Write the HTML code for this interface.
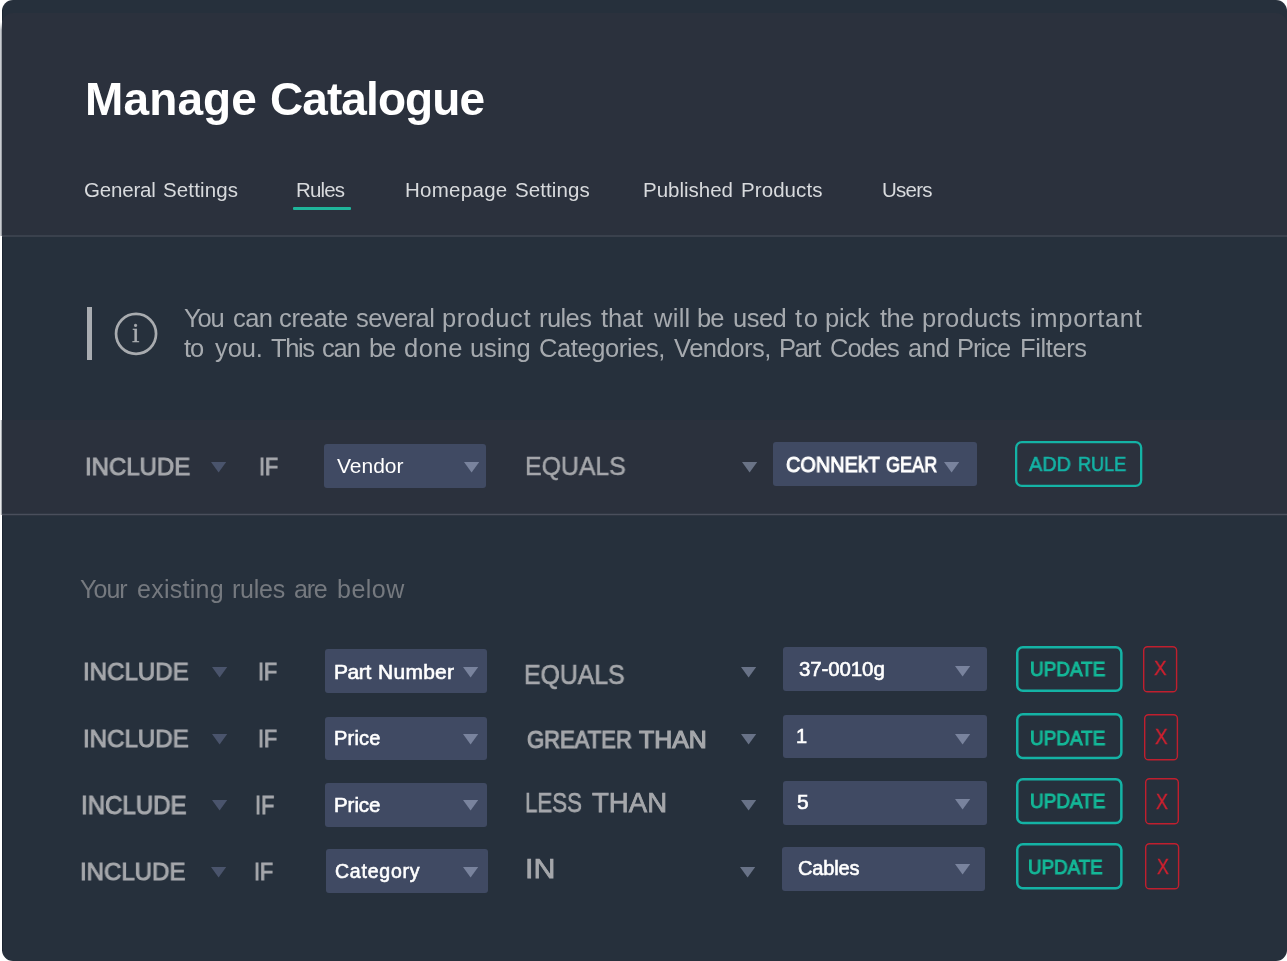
<!DOCTYPE html>
<html lang="en">
<head>
<meta charset="utf-8">
<title>Manage Catalogue</title>
<style>
  html, body { margin: 0; padding: 0; }
  body {
    width: 1287px; height: 961px; position: relative; overflow: hidden;
    background: #ffffff;
    font-family: "Liberation Sans", sans-serif;
  }
  .abs { position: absolute; }
  #panel { left: 2px; top: 0; width: 1285px; height: 961px; background: #26303c; border-radius: 11px; }
  #panel-edge { left: 2px; top: 10px; width: 1px; height: 941px; background: #1b2431; }
  #hdr { left: 2px; top: 13px; width: 1285px; height: 222px; background: #2b313d; border-radius: 11px 11px 0 0; }
  #band { left: 2px; top: 420px; width: 1285px; height: 94px; background: #2b313d; }
  .strip { left: 0; width: 3px; background: linear-gradient(to right, #cdd0d5 0, #c4c7cc 1.2px, #2b313d 2.4px); }
  #strip1 { top: 21px; height: 215px; }
  #strip1top { left: 0; top: 20px; width: 2px; height: 10px; background: linear-gradient(to bottom, rgba(255,255,255,1) 20%, rgba(255,255,255,0)); }
  #strip2 { top: 420px; height: 95px; background: linear-gradient(to right, #eceded 0, #e2e4e6 1.2px, #2b313d 2.2px); }
  .hr { left: 2px; width: 1285px; }
  #hr1 { top: 235px; height: 2px; background: #3a414d; }
  #hr2 { top: 514px; height: 1px; background: #4a4f5c; box-shadow: 0 1px 0 #2f3642, 0 -1px 0 #313844; }

  .t { position: absolute; white-space: nowrap; line-height: 1; margin: 0; padding: 0; transform-origin: 0 0; will-change: transform; }
  .sb { -webkit-text-stroke: 1px currentColor; }
  .mb { -webkit-text-stroke: 0.6px currentColor; }

  #title { position: absolute; left: 0; top: 0; }
  .tab { font-size: 20px; color: #d8dadd; top: 180px; }
  #ul { left: 292.5px; top: 207px; width: 58px; height: 3px; background: #1fb59b; border-radius: 1px; }

  #bar { left: 87px; top: 307px; width: 5px; height: 53px; background: #a9acb1; }
  #circ { left: 113px; top: 311px; }
  #ci { left: 132.4px; top: 319.6px; font-family: "Liberation Serif", serif; font-size: 27px; color: #a8abaf; -webkit-text-stroke: 0.35px #a8abaf; }
  .info { font-size: 25.5px; color: #a6aaaf; }
  .infop { position: absolute; left: 0; top: 0; margin: 0; }

  .lbl { font-size: 25px; color: #a6a8ac; }
  .op { font-size: 27px; color: #a5a7ab; -webkit-text-stroke: 0.5px currentColor; }
  .op.n { -webkit-text-stroke-width: 0.7px; }
  .op.m { -webkit-text-stroke-width: 0.75px; }
  .op.h { -webkit-text-stroke-width: 1.2px; }
  .opw, .grp { position: absolute; left: 0; top: 0; }
  .tri { position: absolute; fill: #4a546c; overflow: visible; }
  .tri.m { fill: #687287; }
  .tri.l { fill: #79839d; }
  .tri.g { fill: #6a7386; }
  .sel { position: absolute; background: #404a63; border-radius: 3px; }
  .sv { font-size: 21px; color: #ffffff; }
  .btn { position: absolute; overflow: visible; fill: none; stroke: #14b3a5; }
  .bt { font-size: 21px; color: #14b898; }
  .xb { position: absolute; overflow: visible; fill: none; stroke: #c01f2e; }
  .xt { font-size: 20px; color: #d0202f; -webkit-text-stroke: 0.35px currentColor; }
  .note { font-size: 25px; color: #75797f; }
  #b_bt .bt { color: #14b3a5; }
</style>
</head>
<body>
<div id="panel" class="abs"></div>
<div id="panel-edge" class="abs"></div>
<div id="hdr" class="abs"></div>
<div id="band" class="abs"></div>
<div id="strip1" class="abs strip"></div>
<div id="strip1top" class="abs"></div>
<div id="strip2" class="abs strip"></div>
<div id="hr1" class="abs hr"></div>
<div id="hr2" class="abs hr"></div>

<h1 id="title" style="margin:0;font-size:45px;font-weight:bold;color:#fff"><span id="title_a" class="t" style="left:84.6px;top:76.1px;font-size:46.0px;letter-spacing:0.13px">Manage</span> <span id="title_b" class="t" style="left:269.8px;top:76.1px;font-size:46.0px;letter-spacing:-0.92px">Catalogue</span></h1>

<div id="tab1" class="grp"><span id="tab1_0" class="t tab" style="left:84.0px;top:179.6px;font-size:20.5px;letter-spacing:-0.19px">General</span> <span id="tab1_1" class="t tab" style="left:162.5px;top:179.6px;font-size:20.5px;letter-spacing:0.15px">Settings</span></div>
<div id="tab2" class="t tab" style="left:296.2px;top:179.6px;font-size:20.5px;letter-spacing:-0.87px">Rules</div>
<div id="tab3" class="grp"><span id="tab3_0" class="t tab" style="left:404.9px;top:179.6px;font-size:20.5px;letter-spacing:0.28px">Homepage</span> <span id="tab3_1" class="t tab" style="left:515.0px;top:179.6px;font-size:20.5px;letter-spacing:0.08px">Settings</span></div>
<div id="tab4" class="grp"><span id="tab4_0" class="t tab" style="left:642.9px;top:179.6px;font-size:20.5px;letter-spacing:-0.01px">Published</span> <span id="tab4_1" class="t tab" style="left:741.1px;top:179.6px;font-size:20.5px;letter-spacing:0.08px">Products</span></div>
<div id="tab5" class="t tab" style="left:882.1px;top:179.6px;font-size:20.5px;letter-spacing:-0.73px">Users</div>
<div id="ul" class="abs"></div>

<div id="bar" class="abs"></div>
<svg id="circ" class="abs" width="46" height="46" viewBox="0 0 46 46"><circle cx="23.05" cy="22.85" r="20" fill="none" stroke="#a8abaf" stroke-width="2.7"/></svg>
<div id="ci" class="t">i</div>
<p id="info1" class="infop"><span id="i1w0" class="t info" style="left:184.1px;top:306.2px;font-size:25.5px;letter-spacing:-1.14px">You</span> <span id="i1w1" class="t info" style="left:232.6px;top:306.2px;font-size:25.5px;letter-spacing:-0.60px">can</span> <span id="i1w2" class="t info" style="left:278.6px;top:306.2px;font-size:25.5px;letter-spacing:-0.34px">create</span> <span id="i1w3" class="t info" style="left:356.1px;top:306.2px;font-size:25.5px;letter-spacing:-0.55px">several</span> <span id="i1w4" class="t info" style="left:442.4px;top:306.2px;font-size:25.5px;letter-spacing:0.58px">product</span> <span id="i1w5" class="t info" style="left:538.6px;top:306.2px;font-size:25.5px;letter-spacing:-0.58px">rules</span> <span id="i1w6" class="t info" style="left:600.6px;top:306.2px;font-size:25.5px;letter-spacing:-0.11px">that</span> <span id="i1w7" class="t info" style="left:653.5px;top:306.2px;font-size:25.5px;letter-spacing:0.29px">will</span> <span id="i1w8" class="t info" style="left:697.0px;top:306.2px;font-size:25.5px;letter-spacing:-0.81px">be</span> <span id="i1w9" class="t info" style="left:732.6px;top:306.2px;font-size:25.5px;letter-spacing:-0.51px">used</span> <span id="i1w10" class="t info" style="left:795.0px;top:306.2px;font-size:25.5px;letter-spacing:1.56px">to</span> <span id="i1w11" class="t info" style="left:824.8px;top:306.2px;font-size:25.5px;letter-spacing:-0.16px">pick</span> <span id="i1w12" class="t info" style="left:880.1px;top:306.2px;font-size:25.5px;letter-spacing:-0.46px">the</span> <span id="i1w13" class="t info" style="left:922.0px;top:306.2px;font-size:25.5px;letter-spacing:0.22px">products</span> <span id="i1w14" class="t info" style="left:1029.5px;top:306.2px;font-size:25.5px;letter-spacing:0.68px">important</span></p>
<p id="info2" class="infop"><span id="i2w0" class="t info" style="left:183.8px;top:336.1px;font-size:25.5px;letter-spacing:-1.03px">to</span> <span id="i2w1" class="t info" style="left:215.4px;top:336.1px;font-size:25.5px;letter-spacing:-0.12px">you.</span> <span id="i2w2" class="t info" style="left:271.4px;top:336.1px;font-size:25.5px;letter-spacing:-1.42px">This</span> <span id="i2w3" class="t info" style="left:321.6px;top:336.1px;font-size:25.5px;letter-spacing:-1.15px">can</span> <span id="i2w4" class="t info" style="left:368.8px;top:336.1px;font-size:25.5px;letter-spacing:-1.09px">be</span> <span id="i2w5" class="t info" style="left:403.6px;top:336.1px;font-size:25.5px;letter-spacing:0.55px">done</span> <span id="i2w6" class="t info" style="left:469.6px;top:336.1px;font-size:25.5px;letter-spacing:-0.09px">using</span> <span id="i2w7" class="t info" style="left:538.9px;top:336.1px;font-size:25.5px;letter-spacing:-0.40px">Categories,</span> <span id="i2w8" class="t info" style="left:674.2px;top:336.1px;font-size:25.5px;letter-spacing:-0.46px">Vendors,</span> <span id="i2w9" class="t info" style="left:778.6px;top:336.1px;font-size:25.5px;letter-spacing:-1.50px">Part</span> <span id="i2w10" class="t info" style="left:830.0px;top:336.1px;font-size:25.5px;letter-spacing:-0.98px">Codes</span> <span id="i2w11" class="t info" style="left:907.9px;top:336.1px;font-size:25.5px;letter-spacing:-0.29px">and</span> <span id="i2w12" class="t info" style="left:957.2px;top:336.1px;font-size:25.5px;letter-spacing:-0.95px">Price</span> <span id="i2w13" class="t info" style="left:1019.5px;top:336.1px;font-size:25.5px;letter-spacing:-0.40px">Filters</span></p>

<!-- builder row -->
<div id="b_inc" class="t lbl sb" style="left:85.3px;top:454.9px;font-size:24.5px;transform:scaleX(0.978)">INCLUDE</div>
<svg id="b_tri1" class="tri" style="left:210.9px;top:461.8px" width="16" height="11" viewBox="0 0 16 11"><polygon points="0,0 15.2,0 7.6,10.4"/></svg>
<div id="b_if" class="t lbl sb" style="left:258.8px;top:454.9px;font-size:24.5px;transform:scaleX(0.882)">IF</div>
<div id="b_sel1" class="sel" style="left:324px;top:444px;width:162px;height:44px"></div>
<div id="b_sv1" class="t sv" style="left:337.4px;top:454.7px;font-size:21.0px;letter-spacing:-0.02px">Vendor</div>
<svg id="b_tri2" class="tri l" style="left:463.9px;top:461.8px" width="16" height="11" viewBox="0 0 16 11"><polygon points="0,0 15.2,0 7.6,10.4"/></svg>
<div id="b_op" class="t op" style="left:525.4px;top:452.8px;font-size:26.5px;transform:scaleX(0.938)">EQUALS</div>
<svg id="b_tri3" class="tri g" style="left:742.2px;top:461.8px" width="16" height="11" viewBox="0 0 16 11"><polygon points="0,0 15.2,0 7.6,10.4"/></svg>
<div id="b_sel2" class="sel" style="left:772.5px;top:442px;width:204px;height:44px"></div>
<div id="b_sv2" class="grp"><span id="b_sv2_0" class="t sv sb" style="left:785.5px;top:455.1px;font-size:21.5px;transform:scaleX(0.925)">CONNEkT</span> <span id="b_sv2_1" class="t sv sb" style="left:886.4px;top:455.1px;font-size:21.5px;transform:scaleX(0.839)">GEAR</span></div>
<svg id="b_tri4" class="tri l" style="left:944.2px;top:461.9px" width="16" height="11" viewBox="0 0 16 11"><polygon points="0,0 15.2,0 7.6,10.4"/></svg>
<svg id="b_btn" class="btn" style="left:1015.0px;top:441.0px" width="127.3" height="46.1"><rect x="1.15" y="1.15" width="125.00" height="43.80" rx="5.65" stroke-width="2.3"/></svg>
<div id="b_bt" class="grp"><span id="b_bt_0" class="t bt mb" style="left:1028.8px;top:453.9px;font-size:20.5px;transform:scaleX(0.967)">ADD</span> <span id="b_bt_1" class="t bt mb" style="left:1078.0px;top:453.9px;font-size:20.5px;transform:scaleX(0.882)">RULE</span></div>

<div id="note" class="grp"><span id="note_0" class="t note" style="left:79.8px;top:577.0px;font-size:25.0px;letter-spacing:-0.94px">Your</span> <span id="note_1" class="t note" style="left:136.6px;top:577.0px;font-size:25.0px;letter-spacing:0.26px">existing</span> <span id="note_2" class="t note" style="left:231.8px;top:577.0px;font-size:25.0px;letter-spacing:-0.26px">rules</span> <span id="note_3" class="t note" style="left:293.9px;top:577.0px;font-size:25.0px;letter-spacing:-1.21px">are</span> <span id="note_4" class="t note" style="left:337.4px;top:577.0px;font-size:25.0px;letter-spacing:0.48px">below</span></div>

<!-- rule row 1 -->
<div id="r1_inc" class="t lbl sb" style="left:82.5px;top:660.2px;font-size:24.5px;transform:scaleX(0.983)">INCLUDE</div>
<svg id="r1_tri1" class="tri" style="left:211.9px;top:666.8px" width="16" height="11" viewBox="0 0 16 11"><polygon points="0,0 15.2,0 7.6,10.4"/></svg>
<div id="r1_if" class="t lbl sb" style="left:257.7px;top:660.2px;font-size:24.5px;transform:scaleX(0.882)">IF</div>
<div id="r1_sel1" class="sel" style="left:325.0px;top:649.3px;width:162.0px;height:43.6px"></div>
<div id="r1_sv1" class="grp"><span id="r1_sv1_0" class="t sv mb" style="left:333.6px;top:661.3px;font-size:21.0px;letter-spacing:-0.43px">Part</span> <span id="r1_sv1_1" class="t sv mb" style="left:377.7px;top:661.3px;font-size:21.0px;letter-spacing:0.27px">Number</span></div>
<svg id="r1_tri2" class="tri l" style="left:462.9px;top:666.8px" width="16" height="11" viewBox="0 0 16 11"><polygon points="0,0 15.2,0 7.6,10.4"/></svg>
<div id="r1_op" class="t op n" style="left:524.2px;top:662.4px;font-size:27.0px;transform:scaleX(0.919)">EQUALS</div>
<svg id="r1_tri3" class="tri m" style="left:741.0px;top:666.8px" width="16" height="11" viewBox="0 0 16 11"><polygon points="0,0 15.2,0 7.6,10.4"/></svg>
<div id="r1_sel2" class="sel" style="left:782.9px;top:647.0px;width:204.1px;height:44.0px"></div>
<div id="r1_sv2" class="t sv mb" style="left:798.8px;top:659.0px;font-size:20.5px;letter-spacing:-0.12px">37-0010g</div>
<svg id="r1_tri4" class="tri l" style="left:954.8px;top:665.7px" width="16" height="11" viewBox="0 0 16 11"><polygon points="0,0 15.2,0 7.6,10.4"/></svg>
<svg id="r1_btn" class="btn" style="left:1016.1px;top:646.0px" width="106.6" height="46.1"><rect x="1.25" y="1.25" width="104.10" height="43.60" rx="5.55" stroke-width="2.5"/></svg>
<div id="r1_bt" class="t bt sb" style="left:1030.0px;top:659.2px;font-size:20.0px;transform:scaleX(0.946)">UPDATE</div>
<svg id="r1_xb" class="xb" style="left:1143.0px;top:646.0px" width="34.3" height="46.5"><rect x="0.70" y="0.70" width="32.90" height="45.10" rx="3.90" stroke-width="1.4"/></svg>
<div id="r1_xt" class="t xt" style="left:1154.3px;top:657.1px;font-size:21.0px;transform:scaleX(0.896)">X</div>

<!-- rule row 2 -->
<div id="r2_inc" class="t lbl sb" style="left:82.5px;top:726.6px;font-size:24.5px;transform:scaleX(0.983)">INCLUDE</div>
<svg id="r2_tri1" class="tri" style="left:211.9px;top:734.3px" width="16" height="11" viewBox="0 0 16 11"><polygon points="0,0 15.2,0 7.6,10.4"/></svg>
<div id="r2_if" class="t lbl sb" style="left:257.7px;top:726.6px;font-size:24.5px;transform:scaleX(0.882)">IF</div>
<div id="r2_sel1" class="sel" style="left:324.9px;top:716.7px;width:162.1px;height:43.8px"></div>
<div id="r2_sv1" class="t sv mb" style="left:333.6px;top:727.6px;font-size:20.0px;letter-spacing:0.20px">Price</div>
<svg id="r2_tri2" class="tri l" style="left:462.9px;top:734.3px" width="16" height="11" viewBox="0 0 16 11"><polygon points="0,0 15.2,0 7.6,10.4"/></svg>
<div id="r2_op" class="opw"><span id="r2_op_a" class="t op h" style="left:526.5px;top:727.9px;font-size:24.5px;transform:scaleX(0.899)">GREATER</span> <span id="r2_op_b" class="t op h" style="left:639.4px;top:727.9px;font-size:24.5px;transform:scaleX(1.016)">THAN</span></div>
<svg id="r2_tri3" class="tri m" style="left:741.0px;top:734.2px" width="16" height="11" viewBox="0 0 16 11"><polygon points="0,0 15.2,0 7.6,10.4"/></svg>
<div id="r2_sel2" class="sel" style="left:782.7px;top:714.7px;width:204.1px;height:43.8px"></div>
<div id="r2_sv2" class="t sv mb" style="left:796.2px;top:725.6px;font-size:20.0px;letter-spacing:0.00px">1</div>
<svg id="r2_tri4" class="tri l" style="left:954.8px;top:734.3px" width="16" height="11" viewBox="0 0 16 11"><polygon points="0,0 15.2,0 7.6,10.4"/></svg>
<svg id="r2_btn" class="btn" style="left:1016.1px;top:713.3px" width="106.6" height="46.2"><rect x="1.25" y="1.25" width="104.10" height="43.70" rx="5.55" stroke-width="2.5"/></svg>
<div id="r2_bt" class="t bt sb" style="left:1030.0px;top:727.5px;font-size:20.0px;transform:scaleX(0.946)">UPDATE</div>
<svg id="r2_xb" class="xb" style="left:1144.1px;top:714.1px" width="34.1" height="46.5"><rect x="0.70" y="0.70" width="32.70" height="45.10" rx="3.90" stroke-width="1.4"/></svg>
<div id="r2_xt" class="t xt" style="left:1155.3px;top:726.5px;font-size:21.5px;transform:scaleX(0.878)">X</div>

<!-- rule row 3 -->
<div id="r3_inc" class="t lbl sb" style="left:80.5px;top:792.6px;font-size:25.0px;transform:scaleX(0.962)">INCLUDE</div>
<svg id="r3_tri1" class="tri" style="left:211.9px;top:800.2px" width="16" height="11" viewBox="0 0 16 11"><polygon points="0,0 15.2,0 7.6,10.4"/></svg>
<div id="r3_if" class="t lbl sb" style="left:254.9px;top:792.6px;font-size:25.0px;transform:scaleX(0.869)">IF</div>
<div id="r3_sel1" class="sel" style="left:324.9px;top:782.9px;width:162.1px;height:43.7px"></div>
<div id="r3_sv1" class="t sv mb" style="left:333.6px;top:795.2px;font-size:20.5px;letter-spacing:-0.06px">Price</div>
<svg id="r3_tri2" class="tri l" style="left:462.9px;top:800.2px" width="16" height="11" viewBox="0 0 16 11"><polygon points="0,0 15.2,0 7.6,10.4"/></svg>
<div id="r3_op" class="opw"><span id="r3_op_a" class="t op m" style="left:525.0px;top:790.3px;font-size:27.0px;transform:scaleX(0.825)">LESS</span> <span id="r3_op_b" class="t op m" style="left:592.0px;top:790.3px;font-size:27.0px;transform:scaleX(1.021)">THAN</span></div>
<svg id="r3_tri3" class="tri m" style="left:741.0px;top:800.2px" width="16" height="11" viewBox="0 0 16 11"><polygon points="0,0 15.2,0 7.6,10.4"/></svg>
<div id="r3_sel2" class="sel" style="left:782.7px;top:780.9px;width:204.1px;height:43.7px"></div>
<div id="r3_sv2" class="t sv mb" style="left:797.2px;top:790.5px;font-size:21.0px;letter-spacing:0.00px">5</div>
<svg id="r3_tri4" class="tri l" style="left:954.8px;top:799.0px" width="16" height="11" viewBox="0 0 16 11"><polygon points="0,0 15.2,0 7.6,10.4"/></svg>
<svg id="r3_btn" class="btn" style="left:1016.1px;top:778.3px" width="106.6" height="46.2"><rect x="1.25" y="1.25" width="104.10" height="43.70" rx="5.55" stroke-width="2.5"/></svg>
<div id="r3_bt" class="t bt sb" style="left:1030.0px;top:790.5px;font-size:20.0px;transform:scaleX(0.946)">UPDATE</div>
<svg id="r3_xb" class="xb" style="left:1144.5px;top:778.3px" width="34.0" height="46.5"><rect x="0.70" y="0.70" width="32.60" height="45.10" rx="3.90" stroke-width="1.4"/></svg>
<div id="r3_xt" class="t xt" style="left:1156.1px;top:792.2px;font-size:21.5px;transform:scaleX(0.831)">X</div>

<!-- rule row 4 -->
<div id="r4_inc" class="t lbl sb" style="left:79.5px;top:860.2px;font-size:24.5px;transform:scaleX(0.980)">INCLUDE</div>
<svg id="r4_tri1" class="tri" style="left:210.7px;top:866.8px" width="16" height="11" viewBox="0 0 16 11"><polygon points="0,0 15.2,0 7.6,10.4"/></svg>
<div id="r4_if" class="t lbl sb" style="left:253.7px;top:860.2px;font-size:24.5px;transform:scaleX(0.882)">IF</div>
<div id="r4_sel1" class="sel" style="left:325.6px;top:849.0px;width:162.0px;height:43.8px"></div>
<div id="r4_sv1" class="t sv mb" style="left:335.2px;top:862.2px;font-size:19.5px;letter-spacing:0.78px">Category</div>
<svg id="r4_tri2" class="tri l" style="left:463.2px;top:866.8px" width="16" height="11" viewBox="0 0 16 11"><polygon points="0,0 15.2,0 7.6,10.4"/></svg>
<div id="r4_op" class="t op m" style="left:524.5px;top:854.9px;font-size:27.5px;transform:scaleX(1.105)">IN</div>
<svg id="r4_tri3" class="tri m" style="left:739.9px;top:866.8px" width="16" height="11" viewBox="0 0 16 11"><polygon points="0,0 15.2,0 7.6,10.4"/></svg>
<div id="r4_sel2" class="sel" style="left:781.7px;top:847.0px;width:203.8px;height:44.1px"></div>
<div id="r4_sv2" class="t sv mb" style="left:797.9px;top:858.2px;font-size:20.0px;letter-spacing:-0.16px">Cables</div>
<svg id="r4_tri4" class="tri l" style="left:954.8px;top:864.2px" width="16" height="11" viewBox="0 0 16 11"><polygon points="0,0 15.2,0 7.6,10.4"/></svg>
<svg id="r4_btn" class="btn" style="left:1016.1px;top:843.2px" width="106.6" height="46.5"><rect x="1.25" y="1.25" width="104.10" height="44.00" rx="5.55" stroke-width="2.5"/></svg>
<div id="r4_bt" class="t bt sb" style="left:1028.1px;top:856.9px;font-size:20.0px;transform:scaleX(0.938)">UPDATE</div>
<svg id="r4_xb" class="xb" style="left:1145.2px;top:843.2px" width="34.3" height="46.5"><rect x="0.70" y="0.70" width="32.90" height="45.10" rx="3.90" stroke-width="1.4"/></svg>
<div id="r4_xt" class="t xt" style="left:1157.3px;top:856.5px;font-size:21.5px;transform:scaleX(0.824)">X</div>

</body>
</html>
